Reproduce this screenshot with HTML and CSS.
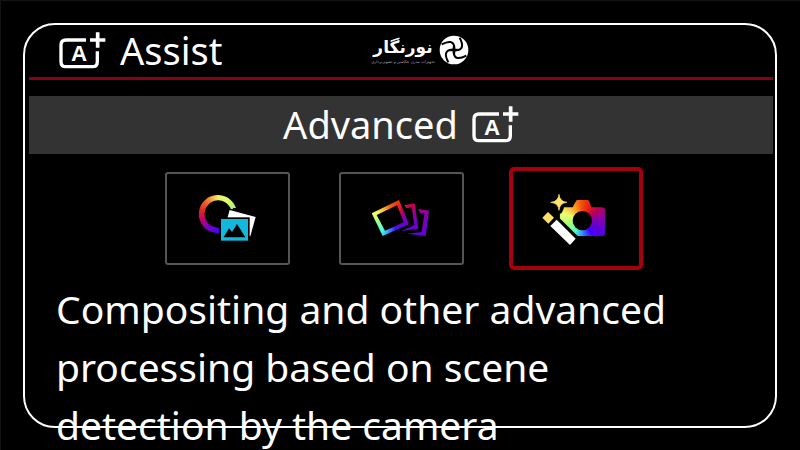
FILE: index.html
```html
<!DOCTYPE html>
<html lang="en">
<head>
<meta charset="utf-8">
<title>Assist</title>
<link rel="stylesheet" href="styles.css">
</head>
<body>
<main class="screen">
  <header class="header">
    <h1 class="title">
      <svg class="a-plus" viewBox="177 95 141 111">
        <path d="M258 119H198Q183 119 183 134V184Q183 199 198 199H277Q292 199 292 184V153" fill="none" stroke="#fff" stroke-width="10"/>
        <path d="M270 119H316M293 96V142" stroke="#fff" stroke-width="11"/>
        <text x="237" y="183" text-anchor="middle" class="a-letter">A</text>
      </svg>
      Assist
    </h1>
    <div class="brand" lang="fa" dir="rtl">
      <svg class="swirl" viewBox="0 0 90 90">
        <circle cx="45" cy="45" r="43" fill="#fff"/>
        <g fill="none" stroke="#000" stroke-width="6">
          <path id="blade" d="M8 28Q42 10 46 36Q47 46 45 60"/>
          <use href="#blade" transform="rotate(90 45 45)"/>
          <use href="#blade" transform="rotate(180 45 45)"/>
          <use href="#blade" transform="rotate(270 45 45)"/>
        </g>
      </svg>
      <div class="brand-text">
        <span class="brand-name">نورنگار</span>
        <span class="brand-tag">تجهیزات مدرن عکاسی و تصویربرداری</span>
      </div>
    </div>
  </header>
  <h2 class="band">
    Advanced
    <svg class="a-plus" viewBox="177 95 141 111">
      <path d="M258 119H198Q183 119 183 134V184Q183 199 198 199H277Q292 199 292 184V153" fill="none" stroke="#fff" stroke-width="10"/>
      <path d="M270 119H316M293 96V142" stroke="#fff" stroke-width="11"/>
      <text x="237" y="183" text-anchor="middle" class="a-letter">A</text>
    </svg>
  </h2>
  <div class="modes">
    <button class="mode" type="button" aria-label="Compositing">
      <svg viewBox="21 27 363 267">
        <foreignObject x="117" y="90" width="114" height="114"><div class="ring"></div></foreignObject>
        <path d="M209 135L287 156L271 214L192 194Z" fill="#fff"/>
        <path d="M178 157H269V232H178Z" fill="#000"/>
        <path d="M183 162H264V227H183Z" fill="#12b9dc"/>
        <path d="M191 217L207 190L216 201L231 177L256 217Z" fill="#000"/>
      </svg>
    </button>
    <button class="mode" type="button" aria-label="Continuous frames">
      <svg viewBox="18 27 363 267">
        <foreignObject x="108" y="100" width="180" height="120"><div class="frames"></div></foreignObject>
      </svg>
    </button>
    <button class="mode selected" type="button" aria-label="Advanced processing" aria-pressed="true">
      <svg viewBox="22 24 378 285">
        <foreignObject x="160" y="108" width="140" height="114"><div class="camera"></div></foreignObject>
        <circle cx="230" cy="173" r="29" fill="#000"/>
        <path d="M160 94Q162 116 184 118Q162 120 160 142Q158 120 135 118Q158 116 160 94Z" fill="#ffe36b" stroke="#ffe36b" stroke-width="2"/>
        <path d="M153 170L210 227L193 246L134 189Z" fill="#fff" stroke="#000" stroke-width="12" paint-order="stroke"/>
        <path d="M127 147L145 164L128 182L110 164Z" fill="#ffdf69"/>
      </svg>
    </button>
  </div>
  <p class="description">Compositing and other advanced processing based on scene detection by the camera</p>
</main>
<div class="frame" aria-hidden="true"></div>
</body>
</html>
```
FILE: styles.css
```css
* { box-sizing: border-box; }
html { background: #000; }
body {
  position: relative;
  height: 100vh;
  margin: 0;
  overflow: hidden;
  border-top: 1px solid #131313;
  border-left: 1px solid #131313;
  background: #000;
  color: #fff;
  font-family: "Noto Sans", "Open Sans", sans-serif;
  font-size: 39px;
  line-height: 58px;
}
svg { display: block; flex: none; }
.screen { padding: 24px 27px 0 28px; }
.header {
  display: grid;
  grid-template-columns: 1fr auto 1fr;
  align-items: center;
  height: 55px;
  padding: 0 0 2px 30px;
  border-bottom: 3px solid #8c0013;
}
.title, .band {
  display: flex;
  align-items: center;
  gap: 14px;
  margin: 0;
  font-size: 38px;
  font-weight: 400;
  line-height: 50px;
}
.a-plus { width: 47px; height: 37px; }
.a-letter { font: bold 67px "Liberation Sans", sans-serif; fill: #fff; }
.brand { display: flex; align-items: center; gap: 4px; padding-left: 8px; }
.swirl { width: 30px; height: 30px; }
.brand-text { display: flex; flex-direction: column; align-items: center; }
.brand-name { font: bold 17px/24px "DejaVu Sans", sans-serif; }
.brand-tag { color: #aaa; font: 4px/6px "DejaVu Sans", sans-serif; white-space: nowrap; }
.band {
  justify-content: center;
  height: 58px;
  margin-top: 16px;
  padding-bottom: 2px;
  background: #333;
}
.modes {
  display: flex;
  justify-content: center;
  align-items: center;
  gap: 49px;
  margin-top: 18px;
  padding-left: 2px;
}
.mode {
  width: 125px;
  height: 93px;
  padding: 0;
  border: 2px solid #555;
  border-radius: 3px;
  background: #000;
}
.mode svg { width: 100%; height: 100%; }
.selected {
  width: 134px;
  height: 103px;
  margin: -5px -4px;
  border: 4px solid #a40010;
  border-radius: 5px;
}
.ring {
  width: 114px;
  height: 114px;
  background: conic-gradient(from 0deg at 57px 57px, #f2ee68 0deg, #dbff70 35deg, #a9ef70 70deg, transparent 70deg 178deg, #4c00f0 178deg, #7300cc 215deg, #c0006a 250deg, #e02a20 285deg, #ee7030 320deg, #f2ee68 360deg);
  clip-path: path(evenodd, "M57 0A57 57 0 1 1 56 0ZM57 16A41 41 0 1 0 58 16Z");
}
.frames {
  width: 180px;
  height: 120px;
  background: conic-gradient(from 0deg at 58px 60px, #f06018 0deg, #ef3018 28deg, #c5004a 60deg, #8500b0 85deg, #6500d8 115deg, #4a10ff 155deg, #30a0ff 190deg, #50ffe0 215deg, #90ff90 250deg, #f0ff70 288deg, #f8b030 325deg, #f06018 360deg);
  clip-path: path(evenodd, "M2 45L84 5L114 78L35 113ZM17 50L42 97L98 72L78 21ZM100 21L131 15L142 91L90 98L116 87L130 80L122 27L106 30ZM142 32L174 37L164 113L107 106L152 101L160 46L147 44Z");
}
.camera {
  width: 140px;
  height: 114px;
  background: conic-gradient(from 0deg at 70px 65px, #ef4a08 0deg, #e82010 25deg, #b80058 55deg, #8c00a0 80deg, #6500d0 110deg, #4500ff 145deg, #3090ff 180deg, #50ffc0 215deg, #a0ff78 255deg, #ecff70 290deg, #ff9a20 330deg, #ef4a08 360deg);
  clip-path: path("M15 25H41L51 6Q53 3 56 3H85Q88 3 90 6L98 25H128Q138 25 138 35V101Q138 111 128 111H56L2 58V45Q10 43 11 35Q14 32 15 25Z");
}
.description {
  max-width: 650px;
  margin: 15px 0 0;
  padding-left: 27px;
}
.frame {
  position: absolute;
  inset: 22px 23px 22px 22px;
  border: 2px solid #fff;
  border-radius: 32px;
  pointer-events: none;
}
```
